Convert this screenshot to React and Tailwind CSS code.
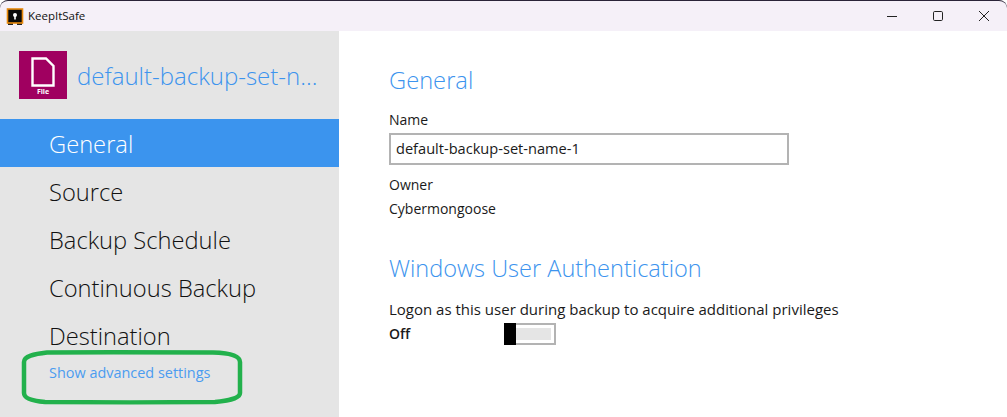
const NAV = ["General", "Source", "Backup Schedule", "Continuous Backup", "Destination"];

export default function App() {
  return (
    <div className="relative w-[1007px] h-[417px] overflow-hidden bg-white flex flex-col font-['Open_Sans',sans-serif] text-[#1a1a1a]">
      {/* title bar */}
      <div className="h-[31px] shrink-0 flex items-center bg-[#f5f0f8] border-t border-t-[#2a2438] rounded-t-[8px]">
        <svg width="18" height="18" viewBox="0 0 18 18" className="ml-[6px] mt-[1px]">
          <rect x="2" y="15" width="5" height="2" fill="#222" />
          <rect x="11" y="15" width="5" height="2" fill="#222" />
          <rect x="1.5" y="1" width="15" height="14" fill="#0a0a0a" stroke="#e8890c" strokeWidth="1.6" />
          <circle cx="9" cy="7" r="2" fill="#fff" />
          <rect x="8.2" y="7.5" width="1.6" height="4" fill="#fff" />
        </svg>
        <span className="ml-[4px] text-[11.5px] text-[#111]">KeepItSafe</span>
        <div className="ml-auto flex items-center h-full">
          <div className="w-[46px] flex justify-center">
            <svg width="10" height="10" viewBox="0 0 10 10"><path d="M0 5.5H10" stroke="#222" strokeWidth="1" /></svg>
          </div>
          <div className="w-[46px] flex justify-center">
            <svg width="10" height="10" viewBox="0 0 10 10"><rect x="0.5" y="0.5" width="9" height="9" rx="1.2" fill="none" stroke="#222" strokeWidth="1" /></svg>
          </div>
          <div className="w-[46px] flex justify-center">
            <svg width="10" height="10" viewBox="0 0 10 10"><path d="M0 0L10 10M10 0L0 10" stroke="#222" strokeWidth="1" /></svg>
          </div>
        </div>
      </div>

      <div className="flex flex-1 min-h-0">
        {/* sidebar */}
        <aside className="w-[339px] shrink-0 bg-[#e5e5e5] flex flex-col">
          <div className="h-[88px] shrink-0 flex items-center pl-[19px] gap-[10px]">
            <div className="w-[48px] h-[48px] bg-[#a00060] flex flex-col items-center pt-[6px]">
              <svg width="24" height="30" viewBox="0 0 24 30">
                <path d="M1.5 1.5H15L22.5 9V28.5H1.5Z" fill="none" stroke="#fff" strokeWidth="2.4" />
              </svg>
              <span className="text-[7px] leading-[8px] font-bold text-white mt-[1px]">File</span>
            </div>
            <span className="text-[24px] font-light text-[#3d94ee] whitespace-nowrap leading-none pt-[2px]">default-backup-set-n...</span>
          </div>
          <nav className="flex flex-col">
            {NAV.map((n, i) => (
              <div
                key={n}
                className={
                  i === 0
                    ? "h-[48px] flex items-center pl-[49px] pt-[4px] text-[23.7px] font-light bg-[#3b94ee] text-white"
                    : "h-[48px] flex items-center pl-[49px] pt-[4px] text-[23.7px] font-light text-[#111]"
                }
              >
                {n}
              </div>
            ))}
          </nav>
          <a className="pl-[49px] mt-[4px] text-[14.45px] leading-[20px] text-[#4b9cf0]">Show advanced settings</a>
        </aside>

        {/* main */}
        <main className="flex-1 pl-[50px] pt-[33px]">
          <h1 className="text-[23.7px] leading-[33px] font-light text-[#3d94ee]">General</h1>
          <div className="mt-[13px] text-[14px] leading-[20px]">Name</div>
          <div className="mt-[3px] w-[400px] h-[32px] border-2 border-[#b3b3b3] flex items-center pl-[5px] text-[14.6px]">
            default-backup-set-name-1
          </div>
          <div className="mt-[10px] text-[14px] leading-[20px]">Owner</div>
          <div className="mt-[4px] text-[14px] leading-[20px]">Cybermongoose</div>
          <h2 className="mt-[33px] text-[23.55px] leading-[33px] font-light text-[#3d94ee]">Windows User Authentication</h2>
          <div className="mt-[14px] text-[15px] leading-[20px]">Logon as this user during backup to acquire additional privileges</div>
          <div className="mt-[4px] flex items-center">
            <span className="w-[115px] text-[14px] leading-[20px] font-semibold">Off</span>
            <div className="relative w-[52px] h-[22px] border-2 border-[#b3b3b3] p-[3px] pl-[10px]">
              <div className="h-full w-full bg-[#e5e5e5]"></div>
              <div className="absolute left-[-2px] top-[-2px] w-[12px] h-[22px] bg-black"></div>
            </div>
          </div>
        </main>
      </div>

      {/* annotation */}
      <svg className="absolute left-[20px] top-[349px]" width="224" height="57" viewBox="0 0 224 57" fill="none">
        <path
          d="M27 3.5C80 3 150 3 193 3.5C210 4 220 7 220 13L220 44C220 49 208 52 195 53C150 53.5 70 53.5 25 53C12 52 4 49 4 44L4 13C4 7 14 5 27 3.5Z"
          stroke="#22b14c"
          strokeWidth="4.5"
        />
      </svg>
    </div>
  );
}
